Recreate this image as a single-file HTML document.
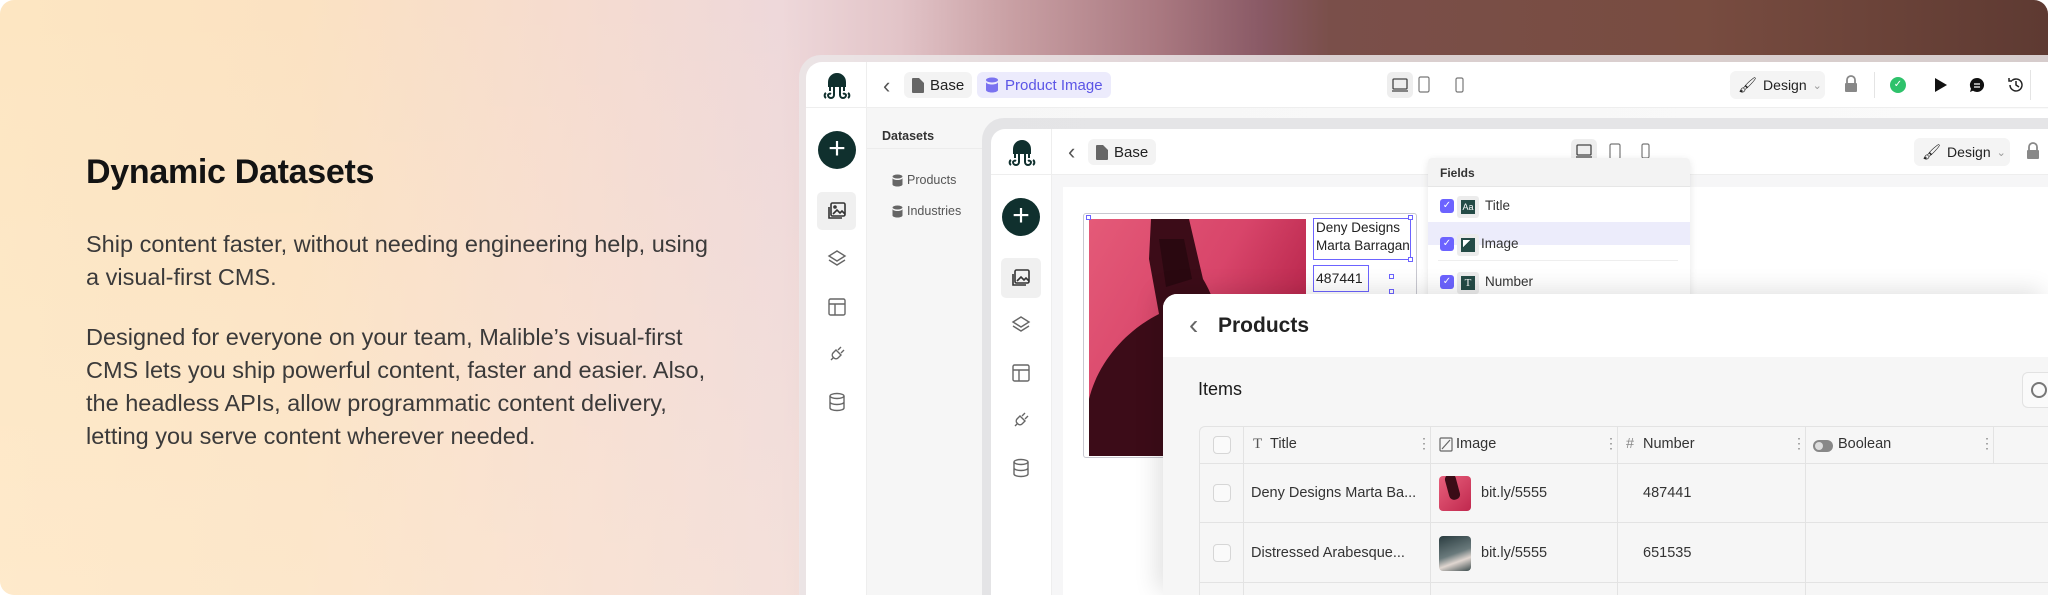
<!DOCTYPE html>
<html><head><meta charset="utf-8">
<style>
*{margin:0;padding:0;box-sizing:border-box}
html,body{width:2048px;height:595px;overflow:hidden}
body{background:#fff;font-family:"Liberation Sans",sans-serif;position:relative}
.bg{position:absolute;left:0;top:0;width:2048px;height:595px;border-radius:14px;overflow:hidden;
background:linear-gradient(90deg,#fde6c2 0,#fbe2c2 300px,#f6dccf 560px,#eed8da 780px,#e2c4c8 900px,#c9a0a4 1010px,#a97880 1160px,#8a5a66 1260px,#7a4f4a 1330px,#784c40 1700px,#5e3a32 2048px)}
.bg:after{content:"";position:absolute;left:0;top:0;width:800px;height:595px;background:linear-gradient(180deg,rgba(255,255,255,0) 0,rgba(255,240,220,.35) 100%)}
.a{position:absolute}
h1{position:absolute;left:86px;top:153px;font-size:34px;font-weight:600;color:#131313;letter-spacing:-.3px}
.p{position:absolute;left:86px;font-size:23.5px;line-height:33px;color:#3b3a3a;white-space:nowrap}
.frame{position:absolute;left:799px;top:55px;width:1249px;height:540px;border-top-left-radius:22px;background:rgba(235,230,232,.85)}
.chip{position:absolute;border-radius:6px;background:#f3f3f3;font-size:15px;color:#222;display:flex;align-items:center;gap:6px;padding:0 8px;white-space:nowrap}
.ic{position:absolute}
.t{position:absolute;white-space:nowrap;color:#222}
</style></head><body>
<div class="bg"></div>
<h1>Dynamic Datasets</h1>
<div class="p" style="top:228px">Ship content faster, without needing engineering help, using<br>a visual-first CMS.</div>
<div class="p" style="top:321px">Designed for everyone on your team, Malible’s visual-first<br>CMS lets you ship powerful content, faster and easier. Also,<br>the headless APIs, allow programmatic content delivery,<br>letting you serve content wherever needed.</div>

<div class="frame"></div>
<div class="a" style="left:806px;top:62px;width:1242px;height:533px;border-top-left-radius:16px;background:#fff;overflow:hidden">
 <div class="a" style="left:60px;top:0;width:1px;height:533px;background:#eee"></div>
 <div class="a" style="left:0;top:45px;width:1242px;height:1px;background:#eee"></div>
 <div class="a" style="left:61px;top:46px;width:1181px;height:487px;background:linear-gradient(90deg,#f6f6f6,#fafafa)"></div>
 <svg class="ic" style="left:15px;top:8px" width="32" height="32" viewBox="0 0 32 32" fill="none" stroke="#10302e" stroke-width="2"><path d="M8 12a8 8 0 0 1 16 0v4H8z" fill="#10302e"/><path d="M9 15v6M23 15v6M13 17v8a3 3 0 0 1-6 0a2 2 0 0 1 3-1M19 17v8a3 3 0 0 0 6 0a2 2 0 0 0-3-1M5 28a3 3 0 0 1 0-5M27 28a3 3 0 0 0 0-5"/></svg>
 <div class="a" style="left:12px;top:69px;width:38px;height:38px;border-radius:50%;background:#10302e;color:#fff;font-size:30px;line-height:36px;text-align:center">+</div>
 <div class="a" style="left:11px;top:130px;width:39px;height:38px;border-radius:5px;background:#f0f0f0"></div>
 <svg class="ic" style="left:20px;top:138px" width="22" height="22" viewBox="0 0 22 22" fill="none" stroke="#333" stroke-width="1.6"><rect x="5" y="3" width="14" height="13" rx="1.5"/><path d="M3 7v11h13M7 14l4-4 3 3 2-2 3 3"/><circle cx="9" cy="7" r="1"/></svg>
 <svg class="ic" style="left:20px;top:186px" width="22" height="22" viewBox="0 0 22 22" fill="none" stroke="#666" stroke-width="1.4"><path d="M11 3l8 5-8 5-8-5z M3 12l8 5 8-5"/></svg>
 <svg class="ic" style="left:21px;top:235px" width="20" height="20" viewBox="0 0 20 20" fill="none" stroke="#666" stroke-width="1.4"><rect x="2" y="2" width="16" height="16" rx="1.5"/><path d="M2 7h16M8 7v11"/></svg>
 <svg class="ic" style="left:21px;top:282px" width="20" height="20" viewBox="0 0 20 20" fill="none" stroke="#666" stroke-width="1.4"><path d="M4 16l3-3M9 6l5 5-3 3a3 3 0 0 1-4 0l-1-1a3 3 0 0 1 0-4zM11 6l3-3M14 9l3-3"/></svg>
 <svg class="ic" style="left:22px;top:330px" width="18" height="20" viewBox="0 0 18 20" fill="none" stroke="#666" stroke-width="1.4"><ellipse cx="9" cy="4" rx="7" ry="2.5"/><path d="M2 4v12c0 1.4 3 2.5 7 2.5s7-1.1 7-2.5V4M2 10c0 1.4 3 2.5 7 2.5s7-1.1 7-2.5"/></svg>
 <div class="t" style="left:77px;top:11px;font-size:22px;color:#555">‹</div>
 <div class="chip" style="left:98px;top:10px;height:26px"><svg width="12" height="15" viewBox="0 0 12 15"><path d="M0 1a1 1 0 0 1 1-1h6l5 5v9a1 1 0 0 1-1 1H1a1 1 0 0 1-1-1z" fill="#666"/></svg>Base</div>
 <div class="chip" style="left:171px;top:10px;height:26px;background:#ecebfc;color:#5b55e6"><svg width="14" height="16" viewBox="0 0 14 16"><ellipse cx="7" cy="3" rx="6" ry="2.5" fill="#7a72f0"/><path d="M1 5c0 1.4 2.7 2.5 6 2.5S13 6.4 13 5v8c0 1.4-2.7 2.5-6 2.5S1 14.4 1 13z" fill="#7a72f0"/></svg>Product Image</div>
 <div class="a" style="left:581px;top:10px;width:26px;height:26px;border-radius:5px;background:#eee"></div>
 <svg class="ic" style="left:585px;top:15px" width="18" height="16" viewBox="0 0 18 16" fill="none" stroke="#444" stroke-width="1.3"><rect x="2" y="2" width="14" height="10" rx="1"/><path d="M1 14h16"/></svg>
 <svg class="ic" style="left:612px;top:14px" width="12" height="17" viewBox="0 0 12 17" fill="none" stroke="#777" stroke-width="1.2"><rect x="1" y="1" width="10" height="15" rx="1.5"/></svg>
 <svg class="ic" style="left:649px;top:15px" width="9" height="16" viewBox="0 0 9 16" fill="none" stroke="#777" stroke-width="1.2"><rect x="1" y="1" width="7" height="14" rx="1.5"/></svg>
 <div class="chip" style="left:924px;top:9px;height:28px;width:95px;background:#f4f4f4">🖌︎<span style="font-size:14px">Design</span><span style="color:#999;font-size:11px">⌄</span></div>
 <svg class="ic" style="left:1037px;top:13px" width="16" height="18" viewBox="0 0 16 18"><path d="M4 8V5a4 4 0 0 1 8 0v3" stroke="#888" stroke-width="1.8" fill="none"/><rect x="2" y="8" width="12" height="9" rx="1" fill="#888"/></svg>
 <div class="a" style="left:1068px;top:10px;width:1px;height:26px;background:#e4e4e4"></div>
 <div class="a" style="left:1084px;top:15px;width:16px;height:16px;border-radius:50%;background:#2ec26b;color:#fff;font-size:10px;text-align:center;line-height:16px">✓</div>
 <svg class="ic" style="left:1128px;top:15px" width="14" height="16" viewBox="0 0 14 16"><path d="M1 1l12 7-12 7z" fill="#111"/></svg>
 <svg class="ic" style="left:1163px;top:15px" width="16" height="16" viewBox="0 0 16 16"><path d="M8 1a7 7 0 1 1-4 12.7L1 15l1-3.3A7 7 0 0 1 8 1z" fill="#111"/><path d="M5 7h6M5 10h6" stroke="#fff" stroke-width="1.3"/></svg>
 <svg class="ic" style="left:1201px;top:14px" width="18" height="18" viewBox="0 0 18 18" fill="none" stroke="#222" stroke-width="1.5"><path d="M3 9a6 6 0 1 0 2-4.5M2 2v3h3M9 5v4l3 2"/></svg>
 <div class="a" style="left:1224px;top:8px;width:1px;height:30px;background:#e4e4e4"></div>
 <div class="t" style="left:76px;top:67px;font-size:12.5px;font-weight:600;color:#333">Datasets</div>
 <div class="a" style="left:61px;top:86px;width:115px;height:1px;background:#ececec"></div>
 <svg class="ic" style="left:86px;top:112px" width="11" height="13" viewBox="0 0 11 13"><ellipse cx="5.5" cy="2.5" rx="5" ry="2" fill="#666"/><path d="M.5 4c0 1 2.2 2 5 2s5-1 5-2v6.5c0 1-2.2 2-5 2s-5-1-5-2z" fill="#666"/></svg>
 <div class="t" style="left:101px;top:111px;font-size:12.5px;color:#555">Products</div>
 <svg class="ic" style="left:86px;top:143px" width="11" height="13" viewBox="0 0 11 13"><ellipse cx="5.5" cy="2.5" rx="5" ry="2" fill="#666"/><path d="M.5 4c0 1 2.2 2 5 2s5-1 5-2v6.5c0 1-2.2 2-5 2s-5-1-5-2z" fill="#666"/></svg>
 <div class="t" style="left:101px;top:142px;font-size:12.5px;color:#555">Industries</div>
 <div class="a" style="left:1134px;top:47px;width:108px;height:20px;background:#fff"></div>
</div>

<div class="a" style="left:982px;top:118px;width:1066px;height:477px;border-top-left-radius:22px;background:rgba(226,226,228,.9)"></div>
<div class="a" style="left:991px;top:129px;width:1057px;height:466px;border-top-left-radius:14px;background:#fff;overflow:hidden">
 <div class="a" style="left:60px;top:0;width:1px;height:466px;background:#eee"></div>
 <div class="a" style="left:0;top:45px;width:1057px;height:1px;background:#eee"></div>
 <div class="a" style="left:61px;top:46px;width:996px;height:420px;background:#f6f6f7"></div>
 <div class="a" style="left:72px;top:58px;width:985px;height:408px;background:#fff"></div>
 <svg class="ic" style="left:15px;top:8px" width="32" height="32" viewBox="0 0 32 32" fill="none" stroke="#10302e" stroke-width="2"><path d="M8 12a8 8 0 0 1 16 0v4H8z" fill="#10302e"/><path d="M9 15v6M23 15v6M13 17v8a3 3 0 0 1-6 0a2 2 0 0 1 3-1M19 17v8a3 3 0 0 0 6 0a2 2 0 0 0-3-1M5 28a3 3 0 0 1 0-5M27 28a3 3 0 0 0 0-5"/></svg>
 <div class="a" style="left:11px;top:69px;width:38px;height:38px;border-radius:50%;background:#10302e;color:#fff;font-size:30px;line-height:36px;text-align:center">+</div>
 <div class="a" style="left:10px;top:129px;width:40px;height:40px;border-radius:5px;background:#f0f0f0"></div>
 <svg class="ic" style="left:19px;top:138px" width="22" height="22" viewBox="0 0 22 22" fill="none" stroke="#333" stroke-width="1.6"><rect x="5" y="3" width="14" height="13" rx="1.5"/><path d="M3 7v11h13M7 14l4-4 3 3 2-2 3 3"/></svg>
 <svg class="ic" style="left:19px;top:185px" width="22" height="22" viewBox="0 0 22 22" fill="none" stroke="#666" stroke-width="1.4"><path d="M11 3l8 5-8 5-8-5z M3 12l8 5 8-5"/></svg>
 <svg class="ic" style="left:20px;top:234px" width="20" height="20" viewBox="0 0 20 20" fill="none" stroke="#666" stroke-width="1.4"><rect x="2" y="2" width="16" height="16" rx="1.5"/><path d="M2 7h16M8 7v11"/></svg>
 <svg class="ic" style="left:20px;top:281px" width="20" height="20" viewBox="0 0 20 20" fill="none" stroke="#666" stroke-width="1.4"><path d="M4 16l3-3M9 6l5 5-3 3a3 3 0 0 1-4 0l-1-1a3 3 0 0 1 0-4zM11 6l3-3M14 9l3-3"/></svg>
 <svg class="ic" style="left:21px;top:329px" width="18" height="20" viewBox="0 0 18 20" fill="none" stroke="#666" stroke-width="1.4"><ellipse cx="9" cy="4" rx="7" ry="2.5"/><path d="M2 4v12c0 1.4 3 2.5 7 2.5s7-1.1 7-2.5V4M2 10c0 1.4 3 2.5 7 2.5s7-1.1 7-2.5"/></svg>
 <div class="t" style="left:77px;top:10px;font-size:22px;color:#555">‹</div>
 <div class="chip" style="left:97px;top:10px;height:26px"><svg width="12" height="15" viewBox="0 0 12 15"><path d="M0 1a1 1 0 0 1 1-1h6l5 5v9a1 1 0 0 1-1 1H1a1 1 0 0 1-1-1z" fill="#666"/></svg>Base</div>
 <div class="a" style="left:580px;top:10px;width:26px;height:24px;border-radius:5px;background:#eee"></div>
 <svg class="ic" style="left:584px;top:14px" width="18" height="16" viewBox="0 0 18 16" fill="none" stroke="#444" stroke-width="1.3"><rect x="2" y="2" width="14" height="10" rx="1"/><path d="M1 14h16"/></svg>
 <svg class="ic" style="left:618px;top:14px" width="12" height="17" viewBox="0 0 12 17" fill="none" stroke="#777" stroke-width="1.2"><rect x="1" y="1" width="10" height="15" rx="1.5"/></svg>
 <svg class="ic" style="left:650px;top:14px" width="9" height="16" viewBox="0 0 9 16" fill="none" stroke="#777" stroke-width="1.2"><rect x="1" y="1" width="7" height="14" rx="1.5"/></svg>
 <div class="chip" style="left:923px;top:9px;height:28px;width:96px;background:#f4f4f4">🖌︎<span style="font-size:14px">Design</span><span style="color:#999;font-size:11px">⌄</span></div>
 <svg class="ic" style="left:1034px;top:13px" width="16" height="18" viewBox="0 0 16 18"><path d="M4 8V5a4 4 0 0 1 8 0v3" stroke="#888" stroke-width="1.8" fill="none"/><rect x="2" y="8" width="12" height="9" rx="1" fill="#888"/></svg>
 <div class="a" style="left:92px;top:84px;width:334px;height:245px;border:1px solid #c8c8d0;border-radius:3px"></div>
 <div class="a" style="left:98px;top:90px;width:217px;height:237px;overflow:hidden;background:linear-gradient(120deg,#e45a78 0,#d8456a 45%,#b8264c 75%,#c93458 100%)">
  <svg width="217" height="237" viewBox="0 0 217 237" style="position:absolute;left:0;top:0"><path d="M62 0h38l14 60c18 30 20 60 10 100l-30 77H0V180c10-40 40-70 70-85L60 40z" fill="#3c0c18"/><path d="M70 20l25 0 8 40-26 8z" fill="#2a0810"/></svg>
 </div>
 <div class="a" style="left:322px;top:89px;width:98px;height:42px;border:1px solid #6c63ff"></div>
 <div class="t" style="left:325px;top:90px;font-size:13.5px;line-height:18px;color:#222">Deny Designs<br>Marta Barragan</div>
 <div class="a" style="left:322px;top:136px;width:56px;height:27px;border:1px solid #6c63ff"></div>
 <div class="t" style="left:325px;top:141px;font-size:14px;color:#222">487441</div>
 <div class="a" style="left:95px;top:86px;width:5px;height:5px;border:1px solid #6c63ff;background:#fff"></div>
 <div class="a" style="left:417px;top:86px;width:5px;height:5px;border:1px solid #6c63ff;background:#fff"></div>
 <div class="a" style="left:417px;top:128px;width:5px;height:5px;border:1px solid #6c63ff;background:#fff"></div>
 <div class="a" style="left:398px;top:145px;width:5px;height:5px;border:1px solid #6c63ff;background:#fff"></div>
 <div class="a" style="left:398px;top:160px;width:5px;height:5px;border:1px solid #6c63ff;background:#fff"></div>
 <div class="a" style="left:437px;top:29px;width:262px;height:300px;background:#fff;box-shadow:0 2px 8px rgba(0,0,0,.1);border-radius:4px;overflow:hidden">
  <div class="a" style="left:0;top:0;width:262px;height:29px;background:#f3f3f3;border-bottom:1px solid #e6e6e6"></div>
  <div class="t" style="left:12px;top:8px;font-size:12px;font-weight:600;color:#333">Fields</div>
  <div class="a" style="left:0;top:64px;width:262px;height:23px;background:#ececfb"></div>
  <div class="a" style="left:12px;top:41px;width:14px;height:14px;border-radius:3px;background:#6c63ff;color:#fff;font-size:10px;text-align:center;line-height:14px">✓</div>
  <div class="a" style="left:29px;top:38px;width:22px;height:22px;border-radius:3px;background:#ececec"></div>
  <div class="a" style="left:33px;top:42px;width:14px;height:14px;background:#244b46;color:#fff;font-size:9px;text-align:center;line-height:14px">Aa</div>
  <div class="t" style="left:57px;top:40px;font-size:13.5px;color:#333">Title</div>
  <div class="a" style="left:12px;top:79px;width:14px;height:14px;border-radius:3px;background:#6c63ff;color:#fff;font-size:10px;text-align:center;line-height:14px">✓</div>
  <div class="a" style="left:29px;top:76px;width:22px;height:22px;border-radius:3px;background:#ececec"></div>
  <div class="a" style="left:33px;top:80px;width:14px;height:14px;background:linear-gradient(135deg,#fff 35%,#244b46 36%);border:2px solid #244b46"></div>
  <div class="t" style="left:53px;top:78px;font-size:13.5px;color:#333">Image</div>
  <div class="a" style="left:10px;top:102px;width:240px;height:1px;background:#eee"></div>
  <div class="a" style="left:12px;top:117px;width:14px;height:14px;border-radius:3px;background:#6c63ff;color:#fff;font-size:10px;text-align:center;line-height:14px">✓</div>
  <div class="a" style="left:29px;top:114px;width:22px;height:22px;border-radius:3px;background:#ececec"></div>
  <div class="a" style="left:33px;top:118px;width:14px;height:14px;background:#244b46;color:#fff;font-size:11px;text-align:center;line-height:14px;font-family:'Liberation Serif',serif">T</div>
  <div class="t" style="left:57px;top:116px;font-size:13.5px;color:#333">Number</div>
 </div>
</div>

<div class="a" style="left:1163px;top:294px;width:885px;height:301px;border-top-left-radius:14px;background:#f6f6f6;box-shadow:-6px -4px 24px rgba(0,0,0,.12);overflow:hidden">
 <div class="a" style="left:0;top:0;width:885px;height:63px;background:#fff"></div>
 <div class="t" style="left:26px;top:15px;font-size:28px;color:#666;font-weight:300">‹</div>
 <div class="t" style="left:55px;top:20px;font-size:21px;font-weight:600;color:#222">Products</div>
 <div class="t" style="left:35px;top:85px;font-size:18px;font-weight:500;color:#1a1a1a">Items</div>
 <div class="a" style="left:859px;top:78px;width:26px;height:36px;border:1px solid #e2e2e2;border-right:none;border-radius:6px 0 0 6px;background:#fafafa"></div>
 <div class="a" style="left:868px;top:88px;width:16px;height:16px;border:2px solid #777;border-radius:50%"></div>
 <div class="a" style="left:36px;top:132px;width:849px;height:169px;border:1px solid #e3e3e3;border-right:none;border-bottom:none;border-radius:6px 0 0 0;background:#f6f6f6"></div>
 <div class="a" style="left:36px;top:169px;width:849px;height:1px;background:#e3e3e3"></div>
 <div class="a" style="left:36px;top:228px;width:849px;height:1px;background:#e3e3e3"></div>
 <div class="a" style="left:36px;top:288px;width:849px;height:1px;background:#e3e3e3"></div>
 <div class="a" style="left:80px;top:132px;width:1px;height:169px;background:#e3e3e3"></div>
 <div class="a" style="left:267px;top:132px;width:1px;height:169px;background:#e3e3e3"></div>
 <div class="a" style="left:454px;top:132px;width:1px;height:169px;background:#e3e3e3"></div>
 <div class="a" style="left:642px;top:132px;width:1px;height:169px;background:#e3e3e3"></div>
 <div class="a" style="left:830px;top:132px;width:1px;height:37px;background:#e3e3e3"></div>
 <div class="a" style="left:50px;top:142px;width:18px;height:18px;border:1px solid #d6d6d6;border-radius:4px;background:#fafafa"></div>
 <div class="a" style="left:50px;top:190px;width:18px;height:18px;border:1px solid #d6d6d6;border-radius:4px;background:#fafafa"></div>
 <div class="a" style="left:50px;top:250px;width:18px;height:18px;border:1px solid #d6d6d6;border-radius:4px;background:#fafafa"></div>
 <div class="t" style="left:90px;top:142px;font-size:15px;color:#555;font-family:'Liberation Serif',serif">T</div>
 <div class="t" style="left:107px;top:142px;font-size:14.5px;color:#333">Title</div>
 <div class="t" style="left:254px;top:141px;font-size:14px;color:#888">⋮</div>
 <svg class="ic" style="left:276px;top:143px" width="14" height="15" viewBox="0 0 14 15" fill="none" stroke="#666" stroke-width="1.2"><rect x="1" y="1" width="12" height="13" rx="1"/><path d="M3 12l8-9"/></svg>
 <div class="t" style="left:293px;top:142px;font-size:14.5px;color:#333">Image</div>
 <div class="t" style="left:441px;top:141px;font-size:14px;color:#888">⋮</div>
 <div class="t" style="left:463px;top:142px;font-size:14.5px;color:#888">#</div>
 <div class="t" style="left:480px;top:142px;font-size:14.5px;color:#333">Number</div>
 <div class="t" style="left:629px;top:141px;font-size:14px;color:#888">⋮</div>
 <div class="a" style="left:650px;top:146px;width:20px;height:12px;border-radius:6px;background:#888"></div>
 <div class="a" style="left:652px;top:148px;width:8px;height:8px;border-radius:50%;background:#ddd"></div>
 <div class="t" style="left:675px;top:142px;font-size:14.5px;color:#333">Boolean</div>
 <div class="t" style="left:817px;top:141px;font-size:14px;color:#888">⋮</div>
 <div class="t" style="left:88px;top:191px;font-size:14.5px;color:#333">Deny Designs Marta Ba...</div>
 <div class="a" style="left:276px;top:182px;width:32px;height:35px;border-radius:4px;background:linear-gradient(135deg,#e8607c,#c0284e);overflow:hidden"><div style="position:absolute;left:8px;top:-2px;width:11px;height:26px;background:#3a0c16;border-radius:5px;transform:rotate(-15deg)"></div></div>
 <div class="t" style="left:318px;top:191px;font-size:14.5px;color:#333">bit.ly/5555</div>
 <div class="t" style="left:480px;top:191px;font-size:14.5px;color:#333">487441</div>
 <div class="t" style="left:88px;top:251px;font-size:14.5px;color:#333">Distressed Arabesque...</div>
 <div class="a" style="left:276px;top:242px;width:32px;height:35px;border-radius:4px;background:linear-gradient(160deg,#2a3c40,#6a7a7c 50%,#e0d6d0 70%,#3a4a4c)"></div>
 <div class="t" style="left:318px;top:251px;font-size:14.5px;color:#333">bit.ly/5555</div>
 <div class="t" style="left:480px;top:251px;font-size:14.5px;color:#333">651535</div>
</div>
</body></html>
